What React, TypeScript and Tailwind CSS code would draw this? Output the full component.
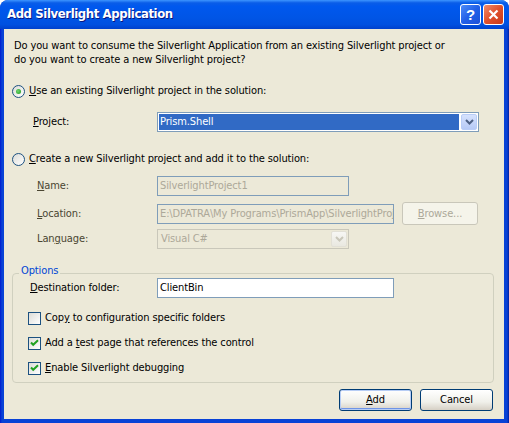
import React from "react";

const F = "font-['DejaVu_Sans_Condensed','Liberation_Sans',sans-serif] text-[11px] leading-[14px] tracking-[-0.12px]";

function Radio({ checked }: { checked?: boolean }) {
  return (
    <div className="w-[13px] h-[13px] rounded-full border border-[#1c5180] bg-[linear-gradient(135deg,#dcdcd7,#ffffff)] flex items-center justify-center shrink-0">
      {checked && (
        <div className="w-[5px] h-[5px] rounded-full bg-[radial-gradient(circle_at_40%_40%,#6fd66f,#1a9a1a)]" />
      )}
    </div>
  );
}

function Check({ checked }: { checked?: boolean }) {
  return (
    <div className="w-[13px] h-[13px] border border-[#1c5180] bg-[linear-gradient(135deg,#dcdcd7,#ffffff)] flex items-center justify-center shrink-0">
      {checked && (
        <svg width="9" height="8" viewBox="0 0 9 8">
          <path d="M1 3.5 L3.2 5.8 L8 1.2" stroke="#21a121" strokeWidth="2" fill="none" />
        </svg>
      )}
    </div>
  );
}

function Chevron({ color }: { color: string }) {
  return (
    <svg width="9" height="6" viewBox="0 0 9 6">
      <path d="M1 1 L4.5 4.5 L8 1" stroke={color} strokeWidth="2" fill="none" />
    </svg>
  );
}

export default function App() {
  return (
    <div className={`w-[509px] h-[423px] bg-white ${F} text-black`}>
      <div className="w-full h-full flex flex-col rounded-t-[8px] overflow-hidden bg-[#0842d6]">
        {/* Title bar */}
        <div className="h-[29px] shrink-0 flex items-center pl-[7px] pr-[5px] bg-[linear-gradient(to_bottom,#3d95ff_0%,#0a5de8_10%,#0058ee_22%,#0055e6_60%,#0050e0_85%,#0041cc_100%)]">
          <div className="flex-1 font-['DejaVu_Sans_Condensed','Liberation_Sans',sans-serif] font-bold text-[13px] leading-[16px] tracking-[-0.4px] text-white [text-shadow:1px_1px_#0a1883] pb-[1px]">
            Add Silverlight Application
          </div>
          <div className="flex items-center gap-[2px]">
            <div className="w-[21px] h-[21px] rounded-[3px] border border-white bg-[linear-gradient(135deg,#4d8cf8,#2160e8_50%,#1c4fd8)] flex items-center justify-center text-white font-bold text-[15px] leading-none font-['Liberation_Sans',sans-serif]">
              ?
            </div>
            <div className="w-[21px] h-[21px] rounded-[3px] border border-white bg-[linear-gradient(135deg,#ef8b6c,#e0502c_50%,#c8391a)] flex items-center justify-center">
              <svg width="11" height="11" viewBox="0 0 11 11">
                <path d="M1.5 1.5 L9.5 9.5 M9.5 1.5 L1.5 9.5" stroke="white" strokeWidth="2.2" />
              </svg>
            </div>
          </div>
        </div>

        {/* Frame + body */}
        <div className="flex-1 flex flex-col pl-[4px] pr-[5px] pb-[4px] bg-[linear-gradient(to_right,#0019cf,#0842d6_2px,#0842d6_calc(100%-2px),#001ea0)]">
          <div className="flex-1 bg-[#ece9d8] flex flex-col">
            <div className="pt-[10px] pl-[10px]">
              <div>Do you want to consume the Silverlight Application from an existing Silverlight project or</div>
              <div>do you want to create a new Silverlight project?</div>
            </div>

            {/* Radio 1 */}
            <div className="mt-[16px] ml-[8px] h-[16px] flex items-center">
              <Radio checked />
              <span className="ml-[4px]">
                <u>U</u>se an existing Silverlight project in the solution:
              </span>
            </div>

            {/* Project */}
            <div className="mt-[13px] ml-[29px] h-[20px] flex items-center">
              <span className="w-[124px]">
                <u>P</u>roject:
              </span>
              <div className="w-[322px] h-[20px] border border-[#7f9db9] bg-white p-[1px] flex">
                <div className="flex-1 bg-[#316ac5] text-white pl-[1px] flex items-center">Prism.Shell</div>
                <div className="ml-[2px] w-[16px] rounded-[2px] border border-[#b9cdf7] bg-[linear-gradient(to_bottom,#d6e2fd,#b6caf6)] flex items-center justify-center">
                  <Chevron color="#4d6185" />
                </div>
              </div>
            </div>

            {/* Radio 2 */}
            <div className="mt-[19px] ml-[8px] h-[16px] flex items-center">
              <Radio />
              <span className="ml-[4px]">
                <u>C</u>reate a new Silverlight project and add it to the solution:
              </span>
            </div>

            {/* Name */}
            <div className="mt-[9px] ml-[33px] h-[20px] flex items-center text-[#4a4632]">
              <span className="w-[120px]">
                <u>N</u>ame:
              </span>
              <div className="w-[192px] h-[20px] border border-[#7f9db9] pl-[2px] flex items-center text-[#aca899] whitespace-nowrap overflow-hidden">
                SilverlightProject1
              </div>
            </div>

            {/* Location */}
            <div className="mt-[6px] ml-[33px] h-[23px] flex items-center text-[#4a4632]">
              <span className="w-[120px]">
                <u>L</u>ocation:
              </span>
              <div className="w-[237px] h-[20px] border border-[#7f9db9] pl-[2px] flex items-center text-[#aca899] whitespace-nowrap overflow-hidden">
                <span className="overflow-hidden">E:\DPATRA\My Programs\PrismApp\SilverlightProject1</span>
              </div>
              <div className="ml-[8px] w-[76px] h-[23px] rounded-[3px] border border-[#c9c7ba] bg-[#f5f4ea] flex items-center justify-center text-[#aca899]">
                <span>
                  <u>B</u>rowse...
                </span>
              </div>
            </div>

            {/* Language */}
            <div className="mt-[4px] ml-[33px] h-[20px] flex items-center text-[#4a4632]">
              <span className="w-[120px]">
                Lan<u>g</u>uage:
              </span>
              <div className="w-[192px] h-[20px] border border-[#c9c7ba] p-[1px] flex">
                <div className="flex-1 pl-[2px] flex items-center text-[#aca899]">Visual C#</div>
                <div className="w-[16px] rounded-[2px] border border-[#e2e0d6] bg-[linear-gradient(to_bottom,#f7f7f4,#e9e8e0)] flex items-center justify-center">
                  <Chevron color="#c9c7ba" />
                </div>
              </div>
            </div>

            {/* Options group */}
            <fieldset className="mt-[15px] ml-[8px] w-[482px] rounded-[4px] border border-[#d0d0bf] pl-[15px] pb-[6px] flex flex-col">
              <legend className="-ml-[9px] px-[2px] pb-[4px] text-[#0046d5] leading-[14px]">Options</legend>
              <div className="-mt-[4px] ml-[2px] h-[20px] flex items-center">
                <span className="w-[127px]">
                  <u>D</u>estination folder:
                </span>
                <div className="w-[237px] h-[20px] border border-[#7f9db9] bg-white pl-[2px] flex items-center">ClientBin</div>
              </div>
              <div className="mt-[12px] h-[16px] flex items-center">
                <Check />
                <span className="ml-[4px]">
                  Cop<u>y</u> to configuration specific folders
                </span>
              </div>
              <div className="mt-[9px] h-[16px] flex items-center">
                <Check checked />
                <span className="ml-[4px]">
                  Add a <u>t</u>est page that references the control
                </span>
              </div>
              <div className="mt-[9px] h-[16px] flex items-center">
                <Check checked />
                <span className="ml-[4px]">
                  <u>E</u>nable Silverlight debugging
                </span>
              </div>
            </fieldset>

            {/* Buttons */}
            <div className="mt-[6px] pr-[11px] flex justify-end gap-[8px]">
              <div className="w-[73px] h-[22px] rounded-[3px] border border-[#003c74] bg-[linear-gradient(to_bottom,#ffffff,#f0f0ea_60%,#d6d0c5)] [box-shadow:inset_0_0_0_1px_#b7cdf5,inset_0_-2px_0_0_#6f94e6] flex items-center justify-center">
                <span>
                  <u>A</u>dd
                </span>
              </div>
              <div className="w-[73px] h-[22px] rounded-[3px] border border-[#003c74] bg-[linear-gradient(to_bottom,#ffffff,#f0f0ea_60%,#d6d0c5)] flex items-center justify-center">
                Cancel
              </div>
            </div>
          </div>
        </div>
      </div>
    </div>
  );
}
